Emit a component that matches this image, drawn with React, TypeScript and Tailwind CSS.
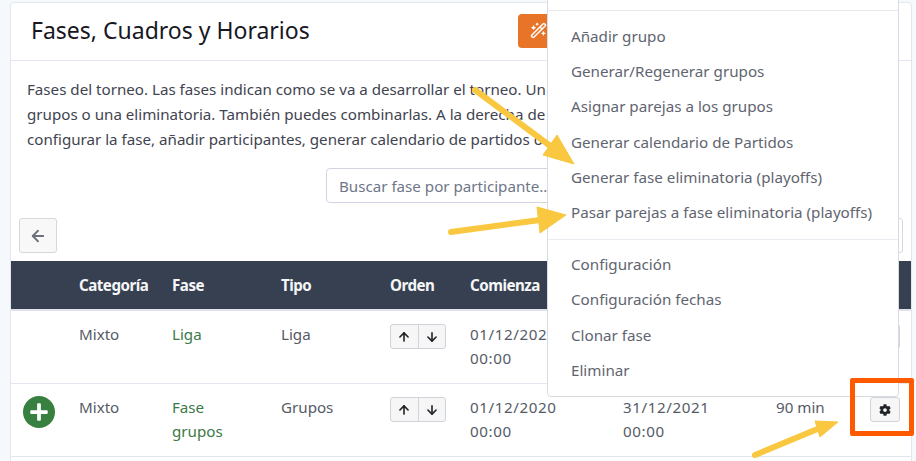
import { ArrowDown, ArrowLeft, ArrowUp, WandSparkles } from 'lucide-react';
import { FaCog, FaPlus } from 'react-icons/fa';

const columns = 'grid grid-cols-[68px_93px_109px_109px_80px_153px_153px_94px_1fr]';

const menuTop = ['Añadir grupo', 'Generar/Regenerar grupos', 'Asignar parejas a los grupos', 'Generar calendario de Partidos', 'Generar fase eliminatoria (playoffs)', 'Pasar parejas a fase eliminatoria (playoffs)'];
const menuBottom = ['Configuración', 'Configuración fechas', 'Clonar fase', 'Eliminar'];

function OrderButtons() {
  return (
    <div className="flex h-[25px] w-[56px] rounded-[3px] border border-[#ced4da] bg-[#f6f6f6] text-[#212529]">
      <span className="flex flex-1 items-center justify-center border-r border-[#ced4da]">
        <ArrowUp size={14} strokeWidth={2.8} />
      </span>
      <span className="flex flex-1 items-center justify-center">
        <ArrowDown size={14} strokeWidth={2.8} />
      </span>
    </div>
  );
}

function GearButton() {
  return (
    <div className="flex h-[25px] w-[30px] items-center justify-center rounded-[3px] border border-[#ced4da] bg-[#f6f6f6] text-[#212529]">
      <FaCog size={12} />
    </div>
  );
}

function Row({ icon, fase, tipo }: { icon?: boolean; fase: string[]; tipo: string }) {
  return (
    <div className={`${columns} h-[73px] border-b border-[#e3e6f0] pt-[11px] text-[#555b66]`}>
      <div className="flex justify-start pt-[1px] pl-3">
        {icon && (
          <span className="flex h-[32px] w-[32px] items-center justify-center rounded-full bg-[#38803f] text-white">
            <FaPlus size={20} />
          </span>
        )}
      </div>
      <div>Mixto</div>
      <div className="text-[#3c7a46]">
        {fase.map(line => (
          <div key={line}>{line}</div>
        ))}
      </div>
      <div>{tipo}</div>
      <div className="pt-[2px]">
        <OrderButtons />
      </div>
      <div className="tracking-[0.6px]">
        <div>01/12/2020</div>
        <div>00:00</div>
      </div>
      <div className="tracking-[0.6px]">
        <div>31/12/2021</div>
        <div>00:00</div>
      </div>
      <div>90 min</div>
      <div className="pt-[2px]">
        <GearButton />
      </div>
    </div>
  );
}

export default function App() {
  return (
    <div className="relative h-[461px] w-[916px] overflow-hidden bg-[#f6f9fc] pt-[2px] pl-[10px] font-['Noto_Sans',sans-serif] text-[15.15px] leading-[24px] text-[#3f4450]">
      <div className="h-[480px] w-[902px] rounded-t-[4px] border border-[#e3e6f0] bg-white">
        <div className="flex h-[58px] items-center justify-between border-b border-[#e3e6f0] pr-4 pl-5">
          <h1 className="-translate-y-[2px] text-[23px] leading-[30px] font-normal text-[#17171f]">Fases, Cuadros y Horarios</h1>
          <div className="flex h-[34px] w-[377px] -translate-y-[1px] items-center rounded-[4px] bg-[#e87428] pl-3 text-white">
            <WandSparkles size={17} />
          </div>
        </div>

        <div className="px-[16px] pt-[16px] whitespace-nowrap">
          <p className="leading-[25px]">Fases del torneo. Las fases indican como se va a desarrollar el torneo. Un</p>
          <p className="leading-[25px]">grupos o una eliminatoria. También puedes combinarlas. A la derecha de</p>
          <p className="leading-[25px]">configurar la fase, añadir participantes, generar calendario de partidos o</p>
        </div>

        <div className="mt-[16px] flex h-[35px] pl-[315px]">
          <div className="flex w-[300px] items-center rounded-[4px] border border-[#d1d3e2] pl-3 text-[#6e7787]">
            Buscar fase por participante...
          </div>
        </div>

        <div className="mt-[15px] flex h-[35px] justify-between pr-2 pl-2">
          <div className="flex w-[38px] items-center justify-center rounded-[3px] border border-[#d6d8dc] bg-[#f8f8f8] text-[#6c7078]">
            <ArrowLeft size={18} strokeWidth={2.4} />
          </div>
          <div className="w-[100px] rounded-[3px] border border-[#d6d8dc]" />
        </div>

        <div className={`${columns} mt-[8px] h-[50px] items-center border-b-2 border-[#dfe2ec] bg-[#374051] font-bold tracking-[-0.5px] text-[#f5f6f8]`}>
          <div />
          <div>Categoría</div>
          <div>Fase</div>
          <div>Tipo</div>
          <div>Orden</div>
          <div>Comienza</div>
          <div />
          <div />
          <div />
        </div>

        <Row fase={['Liga']} tipo="Liga" />
        <Row icon fase={['Fase', 'grupos']} tipo="Grupos" />
      </div>

      {/* dropdown open over the table */}
      <div className="absolute top-[-20px] left-[547px] h-[417px] w-[352px] rounded-b-[4px] border border-[#d8dbe0] bg-white text-[15.2px] text-[#5f6570]">
        <div className="mt-[29px] border-t border-[#e9ebf0] pt-[7.5px]">
          {menuTop.map(item => (
            <div key={item} className="flex h-[35.2px] items-center pl-[23px] whitespace-nowrap">
              {item}
            </div>
          ))}
        </div>
        <div className="mt-[9px] border-t border-[#e9ebf0] pt-[7px]">
          {menuBottom.map(item => (
            <div key={item} className="flex h-[35.2px] items-center pl-[23px] whitespace-nowrap">
              {item}
            </div>
          ))}
        </div>
      </div>

      {/* annotations drawn on top of the screenshot */}
      <svg className="pointer-events-none absolute top-0 left-0" width="916" height="461" viewBox="0 0 916 461">
        <g fill="#f9c840" stroke="#f9c840" strokeLinejoin="round">
          <path d="M475 90 L553 148" strokeWidth="6" strokeLinecap="round" fill="none" />
          <path d="M557 135 L574 164 L543 155 Z" />
          <path d="M451 232 L540 220" strokeWidth="6" strokeLinecap="round" fill="none" />
          <path d="M537 207 L566 215 L540 233 Z" />
          <path d="M755 455 L820 428" strokeWidth="6" strokeLinecap="round" fill="none" />
          <path d="M815 421 L838 422 L820 437 Z" />
        </g>
      </svg>
      <div className="absolute top-[378px] left-[850px] h-[58px] w-[64px] rounded-[2px] border-[5px] border-[#ff5a00]" />
    </div>
  );
}
